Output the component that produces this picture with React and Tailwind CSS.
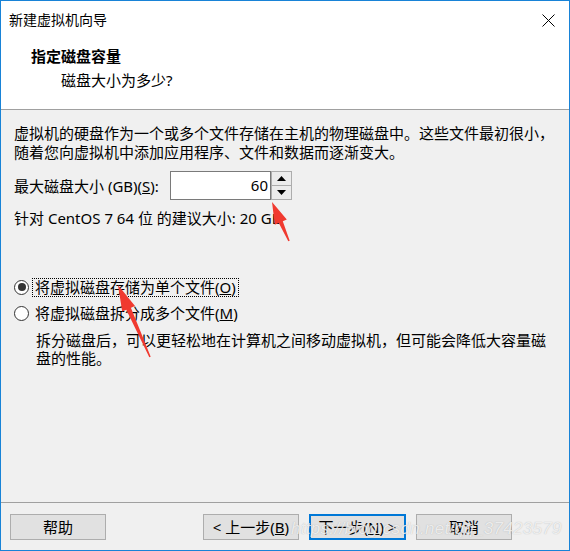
import React from "react";

const FONT = "font-['Noto_Sans','Noto_Sans_CJK_SC',sans-serif]";

function Radio({ checked }) {
  return (
    <span className="w-[15px] h-[15px] rounded-full border border-[#333] bg-white flex items-center justify-center shrink-0">
      {checked && <span className="w-[8px] h-[8px] rounded-full bg-[#333]" />}
    </span>
  );
}

function Btn({ children, primary }) {
  return (
    <button
      className={
        "h-[26px] flex items-center justify-center text-[15px] text-black bg-[#e1e1e1] " +
        (primary ? "w-[97px] border-2 border-[#0078d7]" : "w-[96px] border border-[#adadad]")
      }
    >
      {children}
    </button>
  );
}

export default function App() {
  return (
    <div className={`relative w-[570px] h-[551px] border border-[#1883d7] bg-[#f0f0f0] flex flex-col text-black ${FONT}`}>
      {/* title bar */}
      <div className="h-[38px] bg-white flex items-center justify-between pl-[8px] pr-[14px]">
        <span className="text-[14px] leading-none">新建虚拟机向导</span>
        <svg width="13" height="13" viewBox="0 0 13 13">
          <path d="M0.5 0.5 L12.5 12.5 M12.5 0.5 L0.5 12.5" stroke="#000" strokeWidth="1" fill="none" />
        </svg>
      </div>

      {/* header */}
      <div className="h-[71px] bg-white border-b border-[#a0a0a0] pt-[7px]">
        <div className="pl-[30px] text-[15px] leading-[20px] font-bold">指定磁盘容量</div>
        <div className="pl-[60px] mt-[4px] text-[15px] leading-[20px]">磁盘大小为多少?</div>
      </div>

      {/* body */}
      <div className="flex-1 pl-[13px] pt-[14px] text-[15px]">
        <p className="leading-[19px]">
          虚拟机的硬盘作为一个或多个文件存储在主机的物理磁盘中。这些文件最初很小，
          <br />
          随着您向虚拟机中添加应用程序、文件和数据而逐渐变大。
        </p>

        <div className="mt-[9px] flex items-center">
          <span className="w-[156px] leading-[20px]">
            最大磁盘大小 (GB)(<span className="underline">S</span>):
          </span>
          <div className="w-[101px] h-[29px] bg-white border border-[#7a7a7a] flex items-center justify-end pr-[2px]">
            60
          </div>
          <div className="w-[21px] h-[29px] flex flex-col">
            <div className="flex-1 border border-[#adadad] bg-[#ececec] flex items-center justify-center">
              <svg width="9" height="5" viewBox="0 0 9 5"><path d="M4.5 0 L9 5 L0 5 Z" fill="#000" /></svg>
            </div>
            <div className="flex-1 border border-t-0 border-[#adadad] bg-[#ececec] flex items-center justify-center">
              <svg width="9" height="5" viewBox="0 0 9 5"><path d="M0 0 L9 0 L4.5 5 Z" fill="#000" /></svg>
            </div>
          </div>
        </div>

        <div className="mt-[8px] leading-[20px]">针对 CentOS 7 64 位 的建议大小: 20 GB</div>

        <div className="mt-[49px] flex items-center h-[20px]">
          <Radio checked />
          <span className="ml-[3px] px-[2px] leading-[17px] border border-dotted border-black">
            将虚拟磁盘存储为单个文件(<span className="underline">O</span>)
          </span>
        </div>

        <div className="mt-[6px] flex items-center h-[20px]">
          <Radio />
          <span className="ml-[6px] leading-[20px]">
            将虚拟磁盘拆分成多个文件(<span className="underline">M</span>)
          </span>
        </div>

        <p className="mt-[8px] pl-[22px] leading-[18px]">
          拆分磁盘后，可以更轻松地在计算机之间移动虚拟机，但可能会降低大容量磁
          <br />
          盘的性能。
        </p>
      </div>

      {/* footer */}
      <div className="border-t border-[#a0a0a0] pt-[11px] pb-[10px] pl-[9px] pr-[57px] flex items-center">
        <Btn>帮助</Btn>
        <div className="ml-auto flex gap-[10px]">
          <Btn>
            &lt; 上一步(<span className="underline">B</span>)
          </Btn>
          <Btn primary>
            下一步(<span className="underline">N</span>) &gt;
          </Btn>
          <Btn>取消</Btn>
        </div>
      </div>

      {/* watermark */}
      <div className="absolute left-[290px] top-[515px] text-[17px] tracking-[0.3px] italic text-white/75 font-['Liberation_Sans',sans-serif] pointer-events-none [text-shadow:0_0_1px_rgba(120,120,120,0.5)]">
        https://blog.csdn.net/qq_37423579
      </div>

      {/* red annotation arrows */}
      <svg className="absolute left-0 top-0 pointer-events-none" width="570" height="551" viewBox="0 0 570 551">
        <polygon
          fill="#f03a30"
          points="271,201 285.8,218.6 281.8,220.3 288.7,239.7 287.3,240.3 277.8,222.1 273.8,223.8"
        />
        <polygon
          fill="#f03a30"
          points="117,284 134,305 129.9,306.8 149.7,355.7 148.3,356.3 125.3,308.8 121.2,310.6"
        />
      </svg>
    </div>
  );
}
